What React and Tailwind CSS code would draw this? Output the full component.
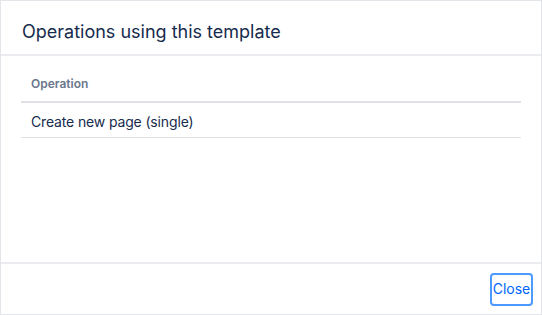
import React from 'react';

const operations = ['Create new page (single)'];

export default function App() {
  return (
    <div
      className="w-[542px] h-[315px] bg-white flex flex-col border border-[#e4e5ea] text-[#172b4d]"
      style={{ fontFamily: 'Inter, "Noto Sans", sans-serif' }}
    >
      <div className="h-[55px] flex items-center pt-[9px] px-[21px] border-b-2 border-[#ebecf0]">
        <h2 className="text-[18px] leading-none">Operations using this template</h2>
      </div>

      <div className="flex-1 px-[20px] pt-[16px]">
        <table className="w-full border-collapse">
          <thead>
            <tr className="border-b-2 border-[#dfe1e6]">
              <th className="text-left text-[12px] font-semibold text-[#6b778c] px-[10px] pb-[6px] h-[30px] align-middle">
                Operation
              </th>
            </tr>
          </thead>
          <tbody>
            {operations.map((op) => (
              <tr key={op} className="border-b border-[#dfe1e6]">
                <td className="text-[14px] tracking-[-0.15px] px-[10px] pt-[3px] h-[35px] align-middle">{op}</td>
              </tr>
            ))}
          </tbody>
        </table>
      </div>

      <div className="h-[52px] border-t-2 border-[#ebecf0] flex items-center justify-end pr-[8px]">
        <button className="w-[43px] h-[33px] rounded-[4px] border-2 border-[#4c9aff] text-[#0065ff] text-[14px] leading-none">
          Close
        </button>
      </div>
    </div>
  );
}
